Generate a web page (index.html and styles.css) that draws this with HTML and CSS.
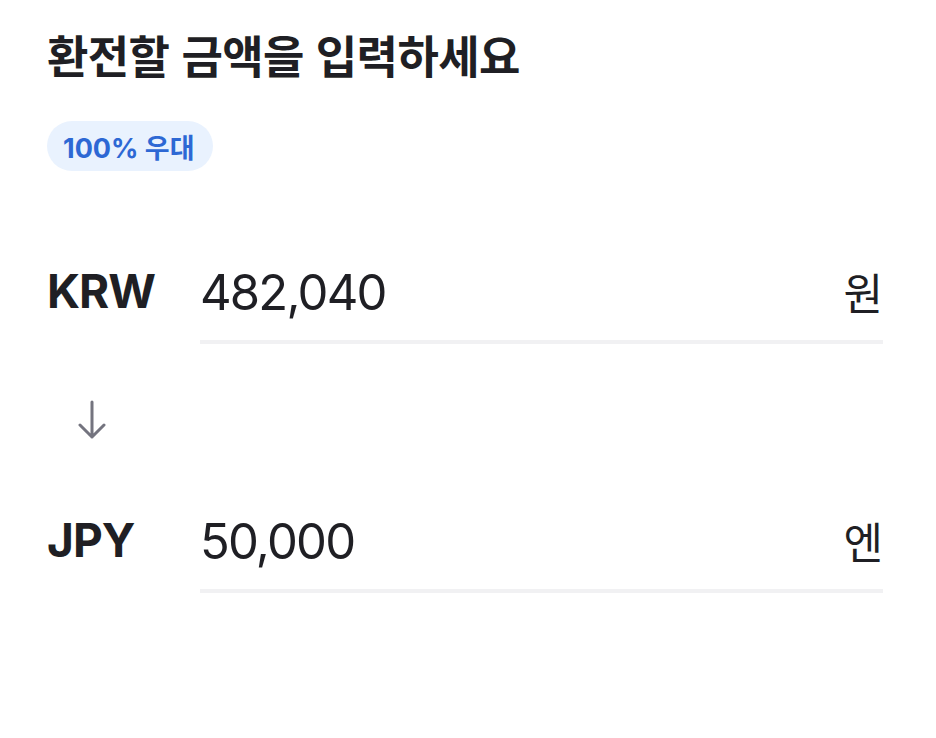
FILE: index.html
```html
<!DOCTYPE html>
<html lang="ko">
<head>
<meta charset="utf-8">
<link rel="stylesheet" href="styles.css">
</head>
<body>
<main class="page">
  <h1 class="title">환전할 금액을 입력하세요</h1>
  <div class="badge">100% 우대</div>
  <div class="row">
    <div class="code">KRW</div>
    <div class="field">
      <span class="amount">482,040</span>
      <span class="unit">원</span>
    </div>
  </div>
  <div class="arrow">
    <svg width="28" height="40" viewBox="0 0 28 40"><path d="M14 2 V37 M2 25 L14 37 L26 25" fill="none" stroke="#74747f" stroke-width="3" stroke-linecap="round" stroke-linejoin="round"/></svg>
  </div>
  <div class="row">
    <div class="code">JPY</div>
    <div class="field">
      <span class="amount">50,000</span>
      <span class="unit">엔</span>
    </div>
  </div>
</main>
</body>
</html>
```
FILE: styles.css
```css
html, body {
  margin: 0;
  padding: 0;
  background: #ffffff;
}
.page {
  padding: 25px 53px 0 47px;
  font-family: Inter, "Noto Sans CJK KR", sans-serif;
  color: #1f1f24;
}
.title {
  margin: 0;
  font-family: "Noto Sans CJK KR", sans-serif;
  font-size: 45px;
  font-weight: 700;
  line-height: 60px;
  letter-spacing: -0.6px;
}
.badge {
  display: inline-flex;
  align-items: center;
  margin-top: 36px;
  height: 50px;
  padding: 0 18px 0 16px;
  border-radius: 25px;
  background: #e9f2fe;
  color: #2d68d4;
  font-size: 27px;
  font-weight: 700;
  letter-spacing: 0;
}
.row {
  display: flex;
  align-items: flex-start;
  margin-top: 90px;
}
.code {
  width: 153px;
  font-size: 46px;
  font-weight: 700;
  line-height: 60px;
  letter-spacing: -1px;
}
.field {
  flex: 1;
  display: flex;
  justify-content: space-between;
  border-bottom: 4px solid #f1f1f3;
  height: 79px;
}
.amount {
  font-size: 49px;
  font-weight: 400;
  line-height: 64px;
  letter-spacing: -1.8px;
}
.unit {
  font-family: "Noto Sans CJK KR", sans-serif;
  font-size: 43px;
  line-height: 60px;
}
.arrow {
  margin: 56px 0 0 31px;
  height: 40px;
}
.arrow + .row {
  margin-top: 70px;
}
```
